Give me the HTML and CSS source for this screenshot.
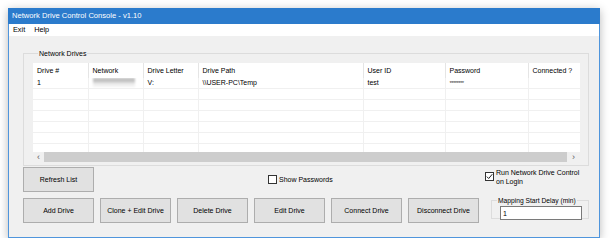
FILE: index.html
```html
<!DOCTYPE html>
<html lang="en">
<head>
    <meta charset="UTF-8">
    <title>Network Drive Control Console - v1.10</title>
    <link rel="stylesheet" href="styles.css">
</head>
<body>
    <div class="window">
        <div class="titlebar">Network Drive Control Console - v1.10</div>
        <div class="menubar">
            <span class="menu-item">Exit</span>
            <span class="menu-item">Help</span>
        </div>

        <div class="client">
            <fieldset class="groupbox drives-box">
                <legend>Network Drives</legend>
                <div class="listview">
                    <div class="list-scroll">
                        <table class="drive-table">
                            <colgroup>
                                <col style="width: 55px">
                                <col style="width: 55px">
                                <col style="width: 55px">
                                <col style="width: 165px">
                                <col style="width: 82px">
                                <col style="width: 83px">
                                <col style="width: 80px">
                            </colgroup>
                            <thead>
                                <tr>
                                    <th>Drive #</th>
                                    <th>Network</th>
                                    <th>Drive Letter</th>
                                    <th>Drive Path</th>
                                    <th>User ID</th>
                                    <th>Password</th>
                                    <th>Connected ?</th>
                                </tr>
                            </thead>
                            <tbody>
                                <tr>
                                    <td>1</td>
                                    <td><span class="blurred"></span></td>
                                    <td>V:</td>
                                    <td>\\USER-PC\Temp</td>
                                    <td>test</td>
                                    <td class="masked">********</td>
                                    <td></td>
                                </tr>
                                <tr><td></td><td></td><td></td><td></td><td></td><td></td><td></td></tr>
                                <tr><td></td><td></td><td></td><td></td><td></td><td></td><td></td></tr>
                                <tr><td></td><td></td><td></td><td></td><td></td><td></td><td></td></tr>
                                <tr><td></td><td></td><td></td><td></td><td></td><td></td><td></td></tr>
                                <tr><td></td><td></td><td></td><td></td><td></td><td></td><td></td></tr>
                                <tr><td></td><td></td><td></td><td></td><td></td><td></td><td></td></tr>
                            </tbody>
                        </table>
                    </div>
                    <div class="hscroll">
                        <span class="arrow">&lsaquo;</span>
                        <span class="thumb"></span>
                        <span class="arrow">&rsaquo;</span>
                    </div>
                </div>
            </fieldset>

            <div class="row row-top">
                <button class="btn">Refresh List</button>
                <label class="check show-pw">
                    <span class="box"></span>
                    <span>Show Passwords</span>
                </label>
                <label class="check run-login">
                    <span class="box checked">
                        <svg width="7" height="7" viewBox="0 0 7 7"><path d="M0.8 3.6 L2.7 5.5 L6.3 1.2" fill="none" stroke="#222" stroke-width="1"/></svg>
                    </span>
                    <span>Run Network Drive Control on Login</span>
                </label>
            </div>

            <div class="row row-bottom">
                <div class="buttons">
                    <button class="btn">Add Drive</button>
                    <button class="btn">Clone + Edit Drive</button>
                    <button class="btn">Delete Drive</button>
                    <button class="btn">Edit Drive</button>
                    <button class="btn">Connect Drive</button>
                    <button class="btn">Disconnect Drive</button>
                </div>
                <fieldset class="groupbox delay-box">
                    <legend>Mapping Start Delay (min)</legend>
                    <input class="textbox" type="text" value="1">
                </fieldset>
            </div>
        </div>
    </div>
</body>
</html>
```

FILE: styles.css
```css
body {
    margin: 0;
    padding: 8px 0 0 8px;
    background-color: #fff;
    font-family: "Liberation Sans", Arial, sans-serif;
    font-size: 7px;
    color: #000;
}
.window {
    width: 590px;
    height: 229px;
    border: 1px solid #4f95dc;
    border-top: none;
    background-color: #f0f0f0;
    box-shadow: 0 2px 9px rgba(0, 0, 0, 0.28);
    display: flex;
    flex-direction: column;
}
.titlebar {
    height: 16px;
    line-height: 16px;
    margin: 0 -1px;
    padding-left: 4px;
    background-color: #2b7bcc;
    color: #fff;
    font-size: 7.6px;
}
.menubar {
    height: 12px;
    line-height: 12px;
    background-color: #fff;
    padding-left: 4px;
    display: flex;
    gap: 9px;
    font-size: 7.3px;
}
.client {
    padding: 13px 10px 0 14px;
}
.groupbox {
    margin: 0;
    border: 1px solid #dcdcdc;
    min-width: 0;
}
.groupbox legend {
    padding: 0 1px;
    margin-left: 5px;
    line-height: 9px;
    white-space: nowrap;
}
.drives-box {
    width: 547px;
    padding: 5px 8px 3px 9px;
}
.listview {
    background-color: #fff;
}
.list-scroll {
    height: 89px;
    overflow: hidden;
}
.drive-table {
    table-layout: fixed;
    border-collapse: collapse;
    width: 575px;
}
.drive-table th {
    height: 15px;
    padding: 0 0 0 4px;
    text-align: left;
    font-weight: normal;
    border-right: 1px solid #e5e5e5;
    white-space: nowrap;
    overflow: hidden;
}
.drive-table td {
    height: 10px;
    padding: 0 0 0 4px;
    line-height: 10px;
    border-right: 1px solid #f0f0f0;
    border-bottom: 1px solid #f0f0f0;
    white-space: nowrap;
    overflow: hidden;
}
.blurred {
    display: inline-block;
    width: 42px;
    height: 9px;
    vertical-align: top;
    background: linear-gradient(to bottom, #b9b9b9 0, #c9c9c9 45%, #ececec 60%, #f4f4f4 100%);
    filter: blur(0.8px);
}
.masked {
    font-size: 6px;
    letter-spacing: -0.6px;
    color: #444;
}
.hscroll {
    height: 10px;
    display: flex;
    align-items: center;
    background-color: #f0f0f0;
}
.hscroll .arrow {
    width: 11px;
    text-align: center;
    font-size: 9px;
    line-height: 10px;
    color: #606060;
}
.hscroll .arrow:last-child {
    width: 13px;
}
.hscroll .thumb {
    flex: 1;
    height: 10px;
    background-color: #cdcdcd;
}
.row {
    display: flex;
}
.row-top {
    margin-top: 1px;
    height: 25px;
}
.btn {
    width: 71px;
    height: 25px;
    margin: 0;
    padding: 0;
    border: 1px solid #adadad;
    background-color: #e1e1e1;
    font-family: "Liberation Sans", Arial, sans-serif;
    font-size: 7px;
    color: #000;
}
.check {
    display: flex;
    gap: 2px;
}
.check .box {
    width: 7px;
    height: 7px;
    flex: none;
    border: 1px solid #333;
    background-color: #fff;
    display: flex;
    align-items: center;
    justify-content: center;
}
.show-pw {
    margin-left: 174px;
    align-items: center;
    line-height: 9px;
}
.run-login {
    margin-left: auto;
    width: 102px;
    margin-right: 2px;
    margin-top: 2px;
    line-height: 8.5px;
    align-items: flex-start;
}
.run-login .box {
    margin-top: 3px;
}
.row-bottom {
    margin-top: 4px;
    align-items: flex-start;
}
.buttons {
    display: flex;
    gap: 6px;
    margin-top: 2px;
}
.delay-box {
    margin-left: auto;
    margin-right: 0;
    width: 84px;
    height: 17px;
    padding: 1px 4px 3px 8px;
}
.delay-box legend {
    margin-left: -3px;
    font-size: 6.7px;
}
.textbox {
    width: 82px;
    height: 14px;
    margin: 0;
    padding: 0 2px;
    box-sizing: border-box;
    border: 1px solid #7a7a7a;
    background-color: #fff;
    font-family: "Liberation Sans", Arial, sans-serif;
    font-size: 7px;
    outline: none;
}
```
